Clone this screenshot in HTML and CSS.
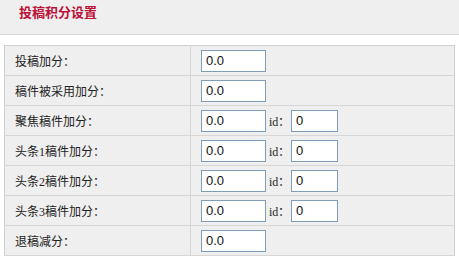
FILE: index.html
```html
<!DOCTYPE html>
<html lang="zh-CN">
<head>
  <meta charset="UTF-8">
  <title>投稿积分设置</title>
  <link rel="stylesheet" href="styles.css">
</head>
<body>
  <div class="header">
    <h2>投稿积分设置</h2>
  </div>
  <table class="settings">
    <tr>
      <td class="label">投稿加分：</td>
      <td><input type="text" class="score" value="0.0"></td>
    </tr>
    <tr>
      <td class="label">稿件被采用加分：</td>
      <td><input type="text" class="score" value="0.0"></td>
    </tr>
    <tr>
      <td class="label">聚焦稿件加分：</td>
      <td><input type="text" class="score" value="0.0"><span class="id-label">id：</span><input type="text" class="id" value="0"></td>
    </tr>
    <tr>
      <td class="label">头条<span class="num">1</span>稿件加分：</td>
      <td><input type="text" class="score" value="0.0"><span class="id-label">id：</span><input type="text" class="id" value="0"></td>
    </tr>
    <tr>
      <td class="label">头条<span class="num">2</span>稿件加分：</td>
      <td><input type="text" class="score" value="0.0"><span class="id-label">id：</span><input type="text" class="id" value="0"></td>
    </tr>
    <tr>
      <td class="label">头条<span class="num">3</span>稿件加分：</td>
      <td><input type="text" class="score" value="0.0"><span class="id-label">id：</span><input type="text" class="id" value="0"></td>
    </tr>
    <tr>
      <td class="label">退稿减分：</td>
      <td><input type="text" class="score" value="0.0"></td>
    </tr>
  </table>
</body>
</html>
```

FILE: styles.css
```css
body {
  margin: 0;
  background-color: #fff;
  font-family: "Noto Sans CJK SC", sans-serif;
  font-size: 12px;
  color: #222;
}

.header {
  height: 34px;
  background-color: #efefef;
  border-bottom: 1px solid #d8d8d8;
  margin-bottom: 10px;
}

.header h2 {
  margin: 0;
  padding: 3px 0 0 19px;
  font-size: 13px;
  line-height: 18px;
  font-weight: bold;
  color: #bb0f38;
}

.settings {
  margin-left: 4px;
  width: 451px;
  border-collapse: collapse;
  background-color: #efefef;
  border: 1px solid #d0d0d0;
}

.settings td {
  height: 29px;
  padding: 0;
  border-bottom: 1px solid #d6d6d6;
}

.settings td.label {
  width: 175px;
  padding-left: 10px;
  border-right: 1px solid #d6d6d6;
}

.settings td:last-child {
  padding-left: 10px;
}

.num,
.id-label {
  font-family: "Liberation Serif", serif;
  font-size: 12px;
}

.id-label {
  display: inline-block;
  width: 22px;
  margin-left: 3px;
  vertical-align: middle;
}

input {
  box-sizing: border-box;
  height: 22px;
  margin: 0;
  padding: 0 4px;
  border: 1px solid #7f9db9;
  background-color: #fff;
  font-family: "Liberation Sans", Arial, sans-serif;
  font-size: 13px;
  color: #111;
  vertical-align: middle;
}

input.score {
  width: 65px;
}

input.id {
  width: 47px;
}
```
